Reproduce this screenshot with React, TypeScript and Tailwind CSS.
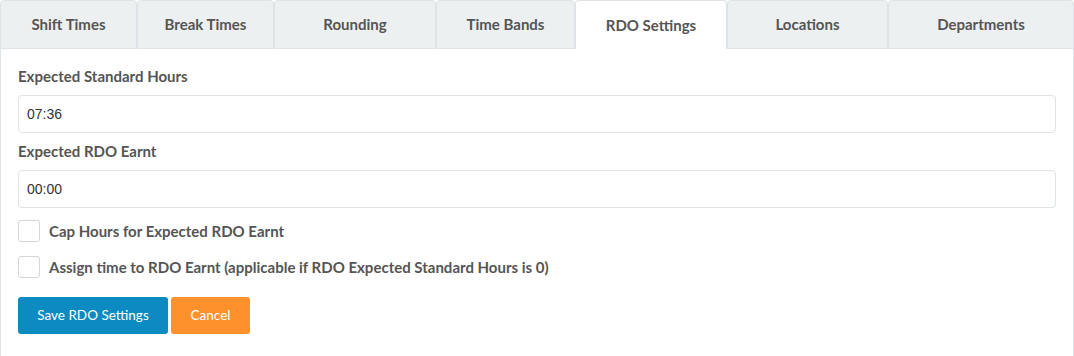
const tabs = [
  { label: 'Shift Times', w: 'w-[137px]' },
  { label: 'Break Times', w: 'w-[137px]' },
  { label: 'Rounding', w: 'w-[162px]' },
  { label: 'Time Bands', w: 'w-[139px]' },
  { label: 'RDO Settings', w: 'w-[152px]', active: true },
  { label: 'Locations', w: 'w-[161px]' },
  { label: 'Departments', w: 'w-[186px]' },
]

export default function App() {
  return (
    <div className="w-[1074px] h-[356px] bg-white font-['Lato',sans-serif] text-[#555]">
      {/* Tabs */}
      <div className="flex h-[49px]">
        {tabs.map((t) => (
          <div
            key={t.label}
            className={
              t.active
                ? `${t.w} flex items-center justify-center rounded-t-[4px] border border-b-0 border-[#dde3e6] bg-white text-[15px] font-bold text-[#555]`
                : `${t.w} flex items-center justify-center rounded-t-[4px] border border-[#dde3e6] bg-[#edf0f1] text-[15px] font-bold text-[#555]`
            }
          >
            {t.label}
          </div>
        ))}
      </div>

      {/* Panel */}
      <div className="h-[307px] border-x border-[#dde3e6] px-[17px] pt-[17px]">
        <label className="block text-[15px] font-bold leading-[20px] text-[#555]">Expected Standard Hours</label>
        <div className="mt-[9px] flex h-[38px] items-center rounded-[4px] border border-[#dde3e6] px-[8px] font-['Liberation_Sans',sans-serif] text-[14px] text-[#333]">
          07:36
        </div>

        <label className="mt-[8px] block text-[15px] font-bold leading-[20px] text-[#555]">Expected RDO Earnt</label>
        <div className="mt-[9px] flex h-[38px] items-center rounded-[4px] border border-[#dde3e6] px-[8px] font-['Liberation_Sans',sans-serif] text-[14px] text-[#333]">
          00:00
        </div>

        <div className="mt-[12px] flex items-center gap-[9px]">
          <span className="h-[22px] w-[22px] rounded-[3px] border border-[#d3d7da] bg-white" />
          <span className="text-[15px] font-bold text-[#555]">Cap Hours for Expected RDO Earnt</span>
        </div>
        <div className="mt-[13px] flex items-center gap-[9px]">
          <span className="h-[22px] w-[22px] rounded-[3px] border border-[#d3d7da] bg-white" />
          <span className="text-[15px] font-bold text-[#555]">
            Assign time to RDO Earnt (applicable if RDO Expected Standard Hours is 0)
          </span>
        </div>

        <div className="mt-[19px] flex gap-[3px]">
          <button className="h-[37px] w-[150px] rounded-[3px] bg-[#0b8bc1] text-[13.5px] text-white">Save RDO Settings</button>
          <button className="h-[37px] w-[79px] rounded-[3px] bg-[#fd922d] text-[13.5px] text-white">Cancel</button>
        </div>
      </div>
    </div>
  )
}
